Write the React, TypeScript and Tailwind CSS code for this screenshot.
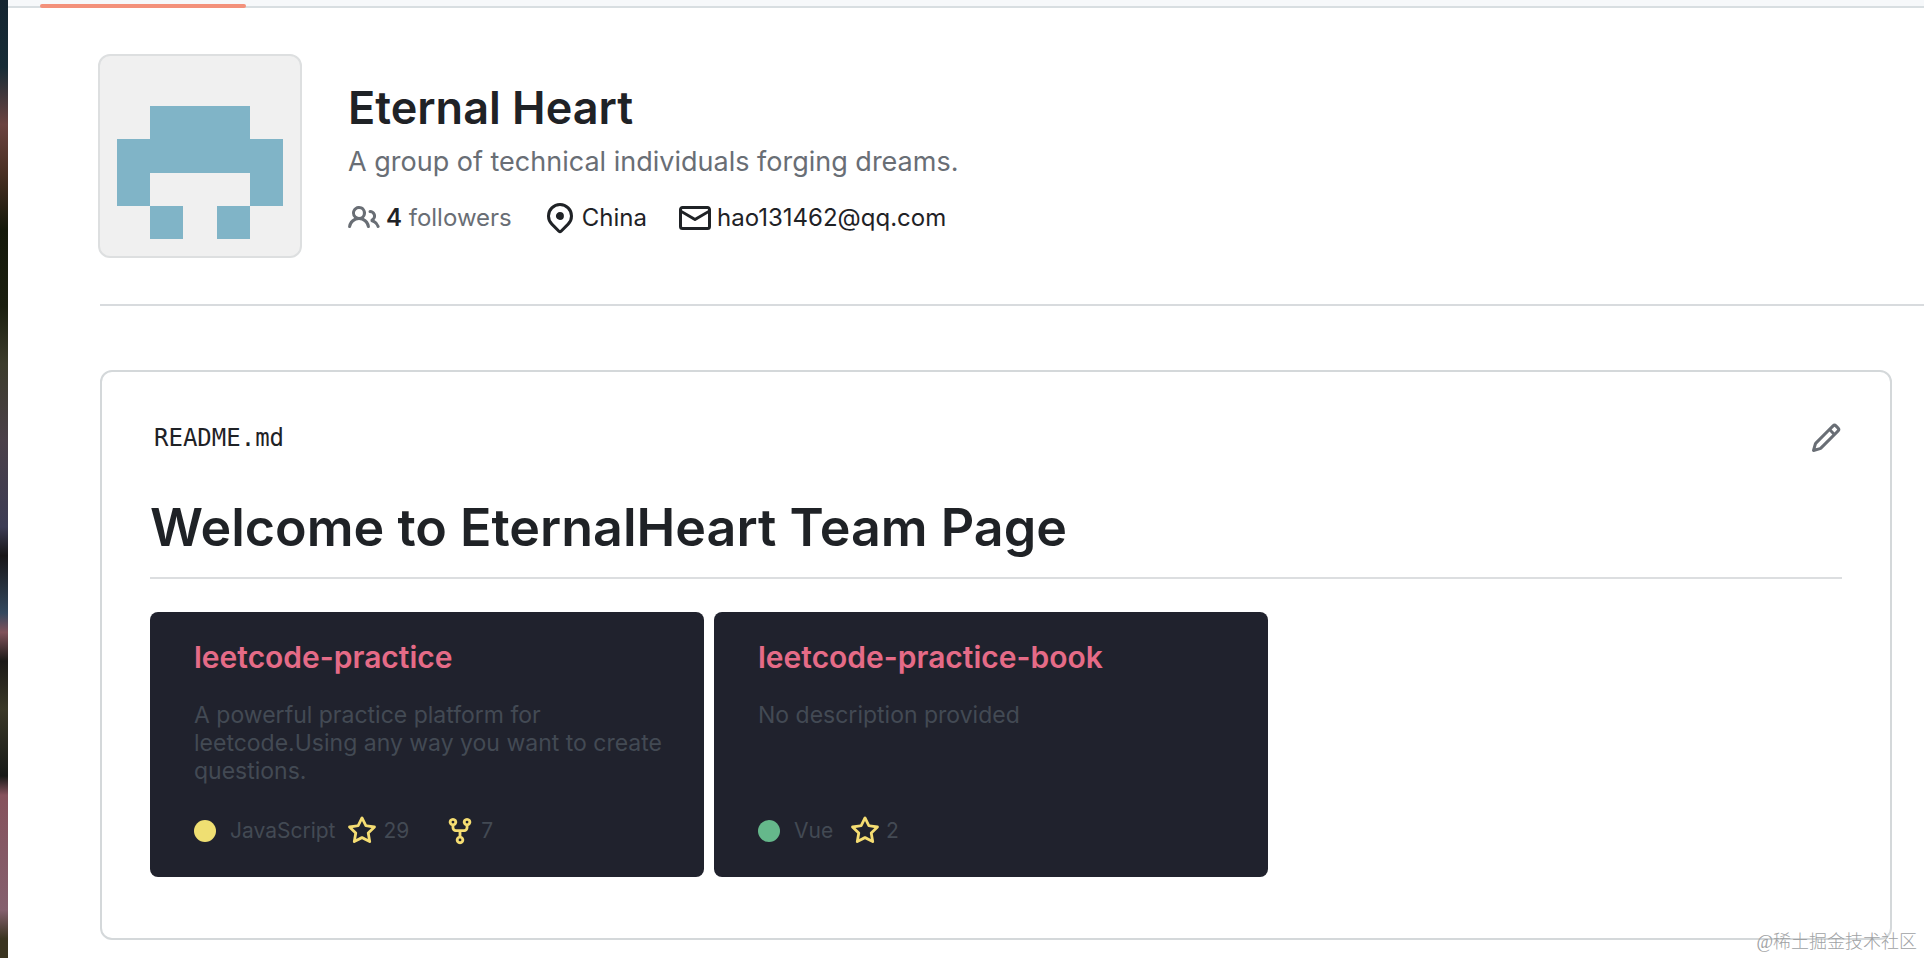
import React from "react";

interface Repo {
  name: string;
  description: string;
  language: string;
  dotClass: string;
  stars: number;
  forks?: number;
}

const repos: Repo[] = [
  {
    name: "leetcode-practice",
    description:
      "A powerful practice platform for leetcode.Using any way you want to create questions.",
    language: "JavaScript",
    dotClass: "bg-[#efdf72]",
    stars: 29,
    forks: 7,
  },
  {
    name: "leetcode-practice-book",
    description: "No description provided",
    language: "Vue",
    dotClass: "bg-[#65b88b]",
    stars: 2,
  },
];

const icons = {
  people:
    "M2 5.5a3.5 3.5 0 1 1 5.898 2.549 5.508 5.508 0 0 1 3.034 4.084.75.75 0 1 1-1.482.235 4 4 0 0 0-7.9 0 .75.75 0 0 1-1.482-.236A5.507 5.507 0 0 1 3.102 8.05 3.493 3.493 0 0 1 2 5.5ZM11 4a3.001 3.001 0 0 1 2.22 5.018 5.01 5.01 0 0 1 2.56 3.012.749.749 0 0 1-.885.954.752.752 0 0 1-.549-.514 3.507 3.507 0 0 0-2.522-2.372.75.75 0 0 1-.574-.73v-.352a.75.75 0 0 1 .416-.672A1.5 1.5 0 0 0 11 5.5.75.75 0 0 1 11 4Zm-5.5-.5a2 2 0 1 0-.001 3.999A2 2 0 0 0 5.5 3.5Z",
  location:
    "m12.596 11.596-3.535 3.536a1.5 1.5 0 0 1-2.122 0l-3.535-3.536a6.5 6.5 0 1 1 9.192-9.193 6.5 6.5 0 0 1 0 9.193Zm-1.06-8.132v-.001a5 5 0 1 0-7.072 7.072L8 14.07l3.536-3.534a5 5 0 0 0 0-7.072ZM8 9a2 2 0 1 1-.001-3.999A2 2 0 0 1 8 9Z",
  mail: "M1.75 2h12.5c.966 0 1.75.784 1.75 1.75v8.5A1.75 1.75 0 0 1 14.25 14H1.75A1.75 1.75 0 0 1 0 12.25v-8.5C0 2.784.784 2 1.75 2ZM1.5 12.251c0 .138.112.25.25.25h12.5a.25.25 0 0 0 .25-.25V5.809L8.38 9.397a.75.75 0 0 1-.76 0L1.5 5.809v6.442Zm13-8.181v-.32a.25.25 0 0 0-.25-.25H1.75a.25.25 0 0 0-.25.25v.32L8 7.88Z",
  pencil:
    "M11.013 1.427a1.75 1.75 0 0 1 2.474 0l1.086 1.086a1.75 1.75 0 0 1 0 2.474l-8.61 8.61c-.21.21-.47.364-.756.445l-3.251.93a.75.75 0 0 1-.927-.928l.929-3.25c.081-.286.235-.547.445-.758l8.61-8.61Zm.176 4.823L9.75 4.81l-6.286 6.287a.253.253 0 0 0-.064.108l-.558 1.953 1.953-.558a.253.253 0 0 0 .108-.064Zm1.238-3.763a.25.25 0 0 0-.354 0L10.811 3.75l1.439 1.44 1.263-1.263a.25.25 0 0 0 0-.354Z",
  star: "M8 .25a.75.75 0 01.673.418l1.882 3.815 4.21.612a.75.75 0 01.416 1.279l-3.046 2.97.719 4.192a.75.75 0 01-1.088.791L8 12.347l-3.766 1.98a.75.75 0 01-1.088-.79l.72-4.194L.818 6.374a.75.75 0 01.416-1.28l4.21-.611L7.327.668A.75.75 0 018 .25zm0 2.445L6.615 5.5a.75.75 0 01-.564.41l-3.097.45 2.24 2.184a.75.75 0 01.216.664l-.528 3.084 2.769-1.456a.75.75 0 01.698 0l2.77 1.456-.53-3.084a.75.75 0 01.216-.664l2.24-2.183-3.096-.45a.75.75 0 01-.564-.41L8 2.694v.001z",
  fork: "M5 3.25a.75.75 0 11-1.5 0 .75.75 0 011.5 0zm0 2.122a2.25 2.25 0 10-1.5 0v.878A2.25 2.25 0 005.75 8.5h1.5v2.128a2.251 2.251 0 101.5 0V8.5h1.5a2.25 2.25 0 002.25-2.25v-.878a2.25 2.25 0 10-1.5 0v.878a.75.75 0 01-.75.75h-4.5A.75.75 0 015 6.25v-.878zm3.75 7.378a.75.75 0 11-1.5 0 .75.75 0 011.5 0zm3-8.75a.75.75 0 100-1.5.75.75 0 000 1.5z",
};

const Icon = ({ path, className }: { path: string; className: string }) => (
  <svg
    viewBox="0 0 16 16"
    fill="currentColor"
    aria-hidden="true"
    className={`shrink-0 ${className}`}
  >
    <path fillRule="evenodd" d={path} />
  </svg>
);

const Avatar = () => (
  <div className="size-[204px] shrink-0 overflow-hidden rounded-xl border-2 border-[#dddfe0] bg-[#f0f0f0]">
    <svg
      viewBox="0 0 12 12"
      fill="#80b4c7"
      shapeRendering="crispEdges"
      role="img"
      aria-label="Eternal Heart avatar"
      className="block size-full"
    >
      <path d="M3 3h6v2h2v4H9V7H3v2H1V5h2z" />
      <path d="M3 9h2v2H3z" />
      <path d="M7 9h2v2H7z" />
    </svg>
  </div>
);

const RepoCard = ({ repo }: { repo: Repo }) => (
  <div className="flex h-[265px] w-[554px] flex-col rounded-lg bg-[#20222d] pt-[27px] pr-6 pb-[31px] pl-11 text-[#434a54]">
    <h2 className="text-[30px] leading-9 font-semibold text-[#e56b87]">
      <a href="#">{repo.name}</a>
    </h2>
    <p className="mt-[26px] text-[23px] leading-7">{repo.description}</p>
    <div className="mt-auto flex items-center text-[21px] leading-7">
      <span className={`size-[22px] rounded-full ${repo.dotClass}`} />
      <span className="ml-3.5 min-w-11">{repo.language}</span>
      <Icon path={icons.star} className="ml-3 size-[30px] text-[#f5dd72]" />
      <span className="ml-1.5">{repo.stars}</span>
      {repo.forks ? (
        <>
          <Icon path={icons.fork} className="ml-9 size-[30px] text-[#f5dd72]" />
          <span className="ml-1.5">{repo.forks}</span>
        </>
      ) : (
        ""
      )}
    </div>
  </div>
);

const App: React.FC = () => {
  return (
    <div className="relative flex min-h-screen overflow-hidden bg-white font-['Inter','Liberation_Sans',sans-serif] text-[#1f2226]">
      <div className="w-2 shrink-0 bg-[linear-gradient(#142430_0%,#172c36_7%,#6b4340_13%,#4a3024_18%,#14180a_24%,#1b1f10_32%,#3c3c2c_38%,#4a4048_46%,#3c3c54_55%,#181618_58%,#34485e_64%,#80525a_66%,#1c1a18_69%,#3a3828_74%,#181a18_81%,#86525c_83%,#84606e_95%,#3a3420_98%)]" />

      <div className="min-w-0 flex-1">
        <div className="relative h-2 border-b-2 border-[#d8dee1] bg-[#f6f8fa]">
          <div className="absolute top-1 left-8 h-1 w-[206px] rounded-sm bg-[#f3917b]" />
        </div>

        <header className="ml-[90px] flex gap-[46px] pt-[46px]">
          <Avatar />
          <div className="pt-6">
            <h1 className="text-[45px] leading-[60px] font-semibold">
              Eternal Heart
            </h1>
            <p className="mt-1 text-[27px] leading-10 text-[#696e75]">
              A group of technical individuals forging dreams.
            </p>
            <ul className="mt-5 flex gap-8 text-[24px] leading-8">
              <li>
                <a href="#" className="flex items-center gap-1.5 text-[#696e75]">
                  <Icon path={icons.people} className="size-8" />
                  <span>
                    <span className="font-semibold text-[#1f2226]">4</span>{" "}
                    followers
                  </span>
                </a>
              </li>
              <li className="flex items-center gap-1.5">
                <Icon path={icons.location} className="size-8" />
                <span>China</span>
              </li>
              <li>
                <a href="#" className="flex items-center gap-1.5">
                  <Icon path={icons.mail} className="size-8" />
                  <span>hao131462@qq.com</span>
                </a>
              </li>
            </ul>
          </div>
        </header>

        <hr className="mt-[46px] ml-[92px] border-t-2 border-[#d8dbde]" />

        <section className="mt-16 mr-8 ml-[92px] rounded-xl border-2 border-[#d4d8da] px-12 pt-12 pb-[61px]">
          <div className="flex h-9 items-center justify-between">
            <a
              href="#"
              className="pl-1 font-['DejaVu_Sans_Mono','Liberation_Mono',monospace] text-[24px] leading-9"
            >
              README.md
            </a>
            <button type="button" aria-label="Edit README" className="text-[#696e75]">
              <Icon path={icons.pencil} className="size-8" />
            </button>
          </div>

          <h1 className="mt-[37px] border-b-2 border-[#dcdee0] pb-3.5 text-[52px] leading-[70px] font-semibold">
            Welcome to EternalHeart Team Page
          </h1>

          <div className="mt-[33px] flex flex-wrap gap-[10px]">
            {repos.map((repo) => (
              <RepoCard key={repo.name} repo={repo} />
            ))}
          </div>
        </section>
      </div>

      <span className="absolute right-[7px] bottom-1 font-['Liberation_Serif','Noto_Sans_CJK_SC',serif] text-[18px] leading-6 font-light text-[#a0a2a4]">
        @稀土掘金技术社区
      </span>
    </div>
  );
};

export default App;
